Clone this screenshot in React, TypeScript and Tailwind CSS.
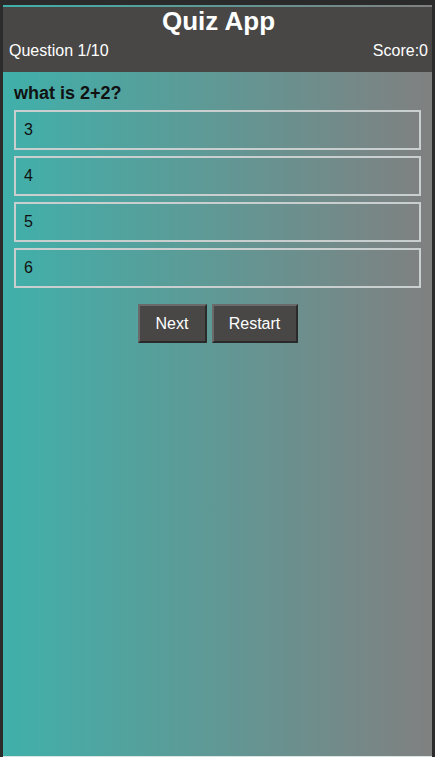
export default function App() {
  const options = ["3", "4", "5", "6"];
  return (
    <div className="h-[757px] bg-[#2b2b2b] px-[3px] pt-[5px] font-['Liberation_Sans',Arial,sans-serif]">
      <div className="flex h-[752px] flex-col border-b border-[#d6e4e4] bg-[linear-gradient(to_right,#40b0aa,#808080)] pt-[2px]">
        <header className="flex h-[65px] flex-col bg-[#484746] pl-[6px] pr-[4px] text-white">
          <h1 className="text-center text-[26px] font-bold leading-[28px]">Quiz App</h1>
          <div className="mt-[6px] flex items-center justify-between text-[16px] leading-[20px]">
            <span>Question 1/10</span>
            <span>Score:0</span>
          </div>
        </header>
        <main className="px-[11px] pt-[10px]">
          <h2 className="text-[18px] font-bold leading-[22px] text-[#111]">what is 2+2?</h2>
          <div className="mt-[6px] flex flex-col gap-[6px]">
            {options.map((o) => (
              <div
                key={o}
                className="flex h-[40px] items-center border-2 border-[#c9cfcf] px-[8px] text-[16px] text-[#111]"
              >
                {o}
              </div>
            ))}
          </div>
          <div className="mt-[16px] flex justify-center gap-[5px]">
            <button className="h-[39px] w-[69px] border-2 border-b-[#2a2a2a] border-l-[#6a6a6a] border-r-[#2a2a2a] border-t-[#6a6a6a] bg-[#484746] text-[16px] text-white">
              Next
            </button>
            <button className="h-[39px] w-[86px] border-2 border-b-[#2a2a2a] border-l-[#6a6a6a] border-r-[#2a2a2a] border-t-[#6a6a6a] bg-[#484746] text-[16px] text-white">
              Restart
            </button>
          </div>
        </main>
      </div>
    </div>
  );
}
